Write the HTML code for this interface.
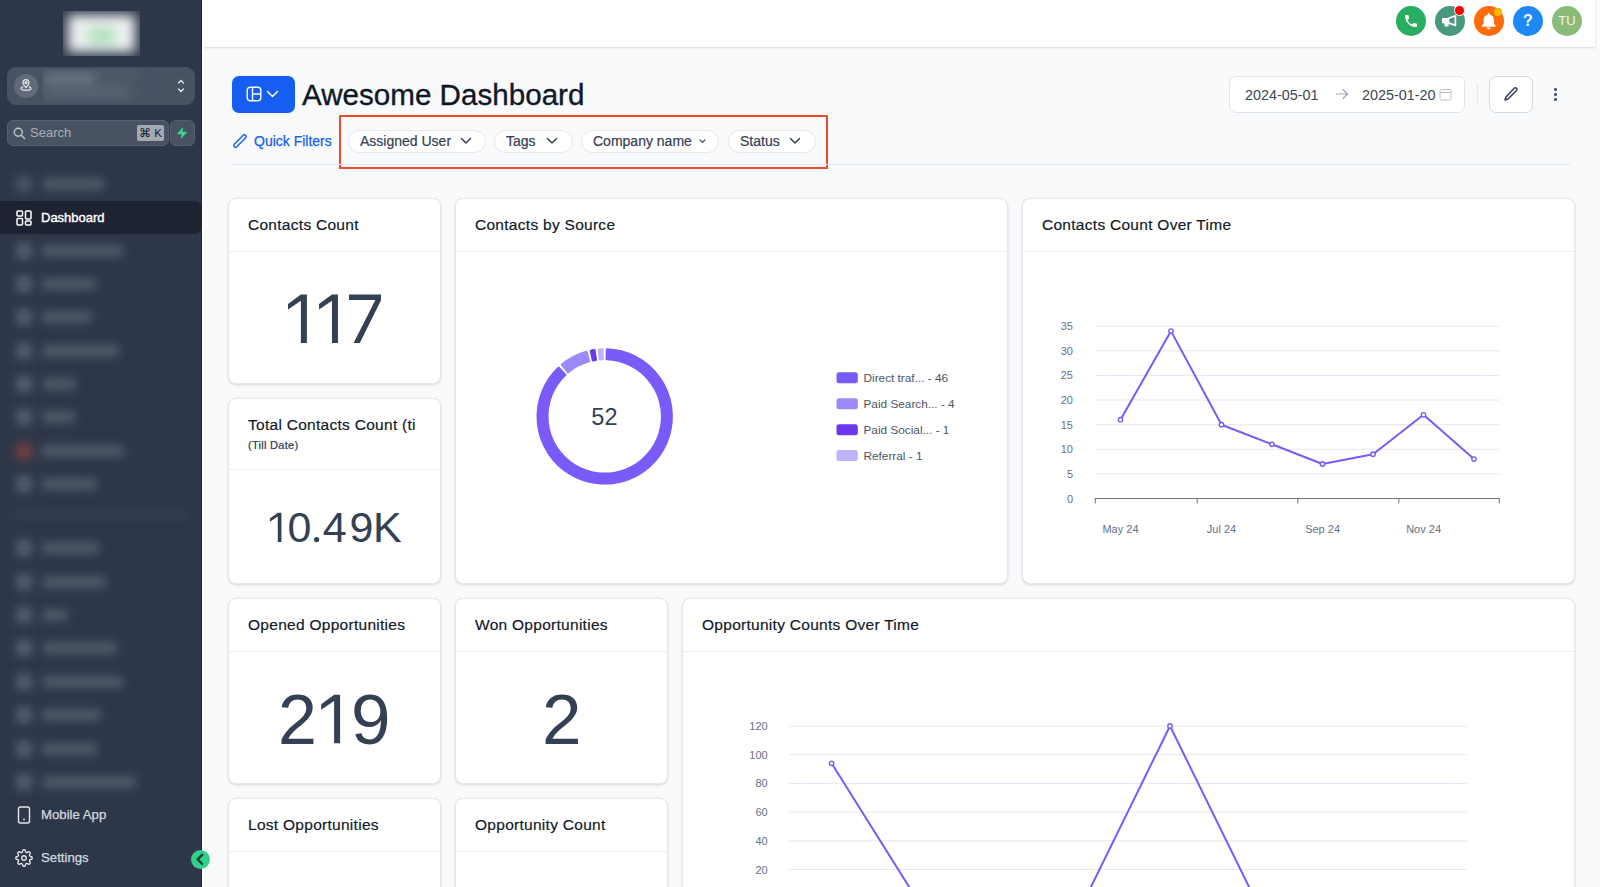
<!DOCTYPE html>
<html>
<head>
<meta charset="utf-8">
<style>
*{box-sizing:border-box;margin:0;padding:0}
html,body{width:1600px;height:887px;overflow:hidden}
body{font-family:"Liberation Sans",sans-serif;background:#f9fafb;position:relative;color:#101828}
.abs{position:absolute}
/* sidebar */
#sb{position:absolute;left:0;top:0;width:202px;height:887px;background:#2e3749;border-right:1px solid #1f2633}
.blur{position:absolute;filter:blur(4px)}
.nb{position:absolute;background:#4f5969;border-radius:3px}
.ni{position:absolute;background:#4b5465;border-radius:3px}
.sbt{position:absolute;color:#d6dae1;font-size:13.2px;-webkit-text-stroke:0.25px #d6dae1}
/* topbar */
#tb{position:absolute;left:202px;top:0;width:1393px;height:47px;background:#fff;box-shadow:0 1px 2px rgba(0,0,0,.14)}
.tic{position:absolute;top:6px;width:30px;height:30px;border-radius:50%}
/* cards */
.card{position:absolute;background:#fff;border:1px solid #e6e8ec;border-radius:8px;box-shadow:0 1px 3px rgba(16,24,40,.10),0 1px 2px rgba(16,24,40,.06)}
.ch{position:absolute;left:0;right:0;top:0;border-bottom:1px solid #edeff2}
.ct{position:absolute;left:19px;font-size:15.5px;color:#101828;white-space:nowrap;-webkit-text-stroke:0.18px #101828;letter-spacing:0.28px}
.big{position:absolute;left:0;right:0;text-align:center;color:#344054;line-height:1}
.pill{position:absolute;top:130px;height:23px;border:1px solid #e4e7ec;border-radius:12px;background:#fff;font-size:14px;color:#344054}
.pill span{position:absolute;top:2px;white-space:nowrap;-webkit-text-stroke:0.2px #344054}
.lab{font-family:"Liberation Sans",sans-serif;font-size:11px;fill:#667085}
</style>
</head>
<body>
<!-- SIDEBAR -->
<div id="sb">
  <div class="abs" style="left:63px;top:11px;width:77px;height:45px;overflow:hidden;background:#343d4e"><div class="blur" style="left:5px;top:4px;width:67px;height:37px;filter:blur(6px);background:radial-gradient(ellipse 45% 50% at 50% 55%,#98d4ab 0%,#c8e8d0 45%,#f2f4f5 75%,#eceef1 100%)"></div></div>
  <!-- location switcher -->
  <div class="abs" style="left:7px;top:67px;width:188px;height:38px;background:#485263;border-radius:9px"></div>
  <div class="abs" style="left:14px;top:74px;width:24px;height:24px;border-radius:50%;background:#606a7a"></div>
  <svg class="abs" style="left:19px;top:78px" width="14" height="14" viewBox="0 0 14 14" fill="none" stroke="#e5e7eb" stroke-width="1.3"><path d="M7 9.5C7 9.5 10 6.8 10 4.6A3 3 0 0 0 4 4.6C4 6.8 7 9.5 7 9.5Z"/><circle cx="7" cy="4.6" r="1"/><path d="M4.2 8.6C2.8 9 2 9.6 2 10.3 2 11.4 4.2 12.2 7 12.2S12 11.4 12 10.3C12 9.6 11.2 9 9.8 8.6"/></svg>
  <div class="abs" style="left:43px;top:69px;width:125px;height:34px;overflow:hidden;background:#485263"><div class="blur" style="left:-6px;top:-4px;width:100px;height:40px;background:#4e5868;filter:blur(6px)"></div><div class="blur" style="left:2px;top:4px;width:50px;height:14px;background:#68717f;filter:blur(5px)"></div><div class="blur" style="left:4px;top:19px;width:80px;height:9px;background:#5a6474;filter:blur(5px)"></div></div>
  <svg class="abs" style="left:176px;top:78px" width="10" height="16" viewBox="0 0 10 16" fill="none" stroke="#e5e7eb" stroke-width="1.3" stroke-linecap="round"><path d="M2.5 5L5 2.5 7.5 5M2.5 11L5 13.5 7.5 11"/></svg>
  <!-- search -->
  <div class="abs" style="left:7px;top:120px;width:162px;height:26px;background:#485263;border:1px solid #566072;border-radius:6px"></div>
  <svg class="abs" style="left:13px;top:127px" width="13" height="13" viewBox="0 0 13 13" fill="none" stroke="#c3c8d0" stroke-width="1.4"><circle cx="5.3" cy="5.3" r="4"/><path d="M8.3 8.3L12 12"/></svg>
  <div class="sbt" style="left:30px;top:125px;color:#aab0ba;font-size:13px;-webkit-text-stroke:0">Search</div>
  <div class="abs" style="left:137px;top:125px;width:27px;height:16px;background:#a3a9b3;border-radius:2px;font-size:11.5px;color:#111827;text-align:center;line-height:16px">&#8984; K</div>
  <div class="abs" style="left:170px;top:120px;width:25px;height:26px;background:#485263;border:1px solid #566072;border-radius:6px"></div>
  <svg class="abs" style="left:176px;top:127px" width="12" height="12" viewBox="0 0 20 20"><path fill="#3bd38f" d="M11.983 1.907a.75.75 0 00-1.292-.657l-8.5 9.5A.75.75 0 002.75 12h6.572l-1.305 6.093a.75.75 0 001.292.657l8.5-9.5A.75.75 0 0017.25 8h-6.572l1.305-6.093z"/></svg>

  <!-- nav -->
  <div id="nav" style="position:absolute;left:0;top:0;width:202px;height:887px;filter:blur(5px)">
<div class="nb" style="left:16px;top:176px;width:16px;height:16px;background:#4b5465"></div>
<div class="nb" style="left:42px;top:178px;width:62px;height:12px"></div>
<div class="nb" style="left:16px;top:243px;width:16px;height:16px;background:#535d6d"></div>
<div class="nb" style="left:42px;top:245px;width:81px;height:12px"></div>
<div class="nb" style="left:16px;top:276px;width:16px;height:16px;background:#535d6d"></div>
<div class="nb" style="left:42px;top:278px;width:54px;height:12px"></div>
<div class="nb" style="left:16px;top:309px;width:16px;height:16px;background:#535d6d"></div>
<div class="nb" style="left:42px;top:311px;width:50px;height:12px"></div>
<div class="nb" style="left:16px;top:343px;width:16px;height:16px;background:#535d6d"></div>
<div class="nb" style="left:42px;top:345px;width:77px;height:12px"></div>
<div class="nb" style="left:16px;top:376px;width:16px;height:16px;background:#535d6d"></div>
<div class="nb" style="left:42px;top:378px;width:34px;height:12px"></div>
<div class="nb" style="left:16px;top:409px;width:16px;height:16px;background:#535d6d"></div>
<div class="nb" style="left:42px;top:411px;width:33px;height:12px"></div>
<div class="nb" style="left:16px;top:443px;width:16px;height:16px;background:#74403f"></div>
<div class="nb" style="left:42px;top:445px;width:82px;height:12px"></div>
<div class="nb" style="left:16px;top:476px;width:16px;height:16px;background:#535d6d"></div>
<div class="nb" style="left:42px;top:478px;width:55px;height:12px"></div>
<div class="nb" style="left:16px;top:540px;width:16px;height:16px;background:#535d6d"></div>
<div class="nb" style="left:42px;top:542px;width:57px;height:12px"></div>
<div class="nb" style="left:16px;top:574px;width:16px;height:16px;background:#535d6d"></div>
<div class="nb" style="left:42px;top:576px;width:64px;height:12px"></div>
<div class="nb" style="left:16px;top:607px;width:16px;height:16px;background:#535d6d"></div>
<div class="nb" style="left:42px;top:609px;width:26px;height:12px"></div>
<div class="nb" style="left:16px;top:640px;width:16px;height:16px;background:#535d6d"></div>
<div class="nb" style="left:42px;top:642px;width:75px;height:12px"></div>
<div class="nb" style="left:16px;top:674px;width:16px;height:16px;background:#535d6d"></div>
<div class="nb" style="left:42px;top:676px;width:81px;height:12px"></div>
<div class="nb" style="left:16px;top:707px;width:16px;height:16px;background:#535d6d"></div>
<div class="nb" style="left:42px;top:709px;width:59px;height:12px"></div>
<div class="nb" style="left:16px;top:741px;width:16px;height:16px;background:#535d6d"></div>
<div class="nb" style="left:42px;top:743px;width:55px;height:12px"></div>
<div class="nb" style="left:16px;top:774px;width:16px;height:16px;background:#535d6d"></div>
<div class="nb" style="left:42px;top:776px;width:94px;height:12px"></div>
<div class="nb" style="left:14px;top:513px;width:174px;height:3px;background:#414a5a"></div>
</div>
</div>
  <div class="abs" style="left:0;top:201px;width:202px;height:33px;background:#1d2330;border-radius:0 8px 8px 0"></div>
  <svg class="abs" style="left:16px;top:210px" width="16" height="16" viewBox="0 0 16 16" fill="none" stroke="#fff" stroke-width="1.5"><rect x="1" y="1" width="5.5" height="5" rx="1"/><rect x="9.5" y="1" width="5.5" height="8" rx="1"/><rect x="1" y="8.5" width="5.5" height="6.5" rx="1"/><rect x="9.5" y="11" width="5.5" height="4" rx="1"/></svg>
  <div class="sbt" style="left:41px;top:210px;color:#fff;font-size:13px;-webkit-text-stroke:0.4px #fff">Dashboard</div>

  <svg class="abs" style="left:16px;top:806px" width="16" height="18" viewBox="0 0 16 18" fill="none" stroke="#e4e7ec" stroke-width="1.4"><rect x="2.5" y="1" width="11" height="16" rx="2"/><circle cx="8" cy="13.5" r="0.9" fill="#e4e7ec" stroke="none"/></svg>
  <div class="sbt" style="left:41px;top:807px">Mobile App</div>
  <svg class="abs" style="left:15px;top:849px" width="18" height="18" viewBox="0 0 24 24" fill="none" stroke="#e4e7ec" stroke-width="1.8"><circle cx="12" cy="12" r="3"/><path d="M19.4 15a1.65 1.65 0 0 0 .33 1.82l.06.06a2 2 0 1 1-2.83 2.83l-.06-.06a1.65 1.65 0 0 0-1.82-.33 1.65 1.65 0 0 0-1 1.51V21a2 2 0 1 1-4 0v-.09A1.65 1.65 0 0 0 9 19.4a1.65 1.65 0 0 0-1.82.33l-.06.06a2 2 0 1 1-2.83-2.83l.06-.06A1.65 1.65 0 0 0 4.68 15a1.65 1.65 0 0 0-1.51-1H3a2 2 0 1 1 0-4h.09A1.65 1.65 0 0 0 4.6 9a1.65 1.65 0 0 0-.33-1.82l-.06-.06a2 2 0 1 1 2.83-2.83l.06.06A1.65 1.65 0 0 0 9 4.68a1.65 1.65 0 0 0 1-1.51V3a2 2 0 1 1 4 0v.09a1.65 1.65 0 0 0 1 1.51 1.65 1.65 0 0 0 1.82-.33l.06-.06a2 2 0 1 1 2.83 2.83l-.06.06A1.65 1.65 0 0 0 19.4 9a1.65 1.65 0 0 0 1.51 1H21a2 2 0 1 1 0 4h-.09a1.65 1.65 0 0 0-1.51 1z"/></svg>
  <div class="sbt" style="left:41px;top:850px">Settings</div>
</div>
<!-- collapse button -->



<!-- TOPBAR -->
<div id="tb"></div>
<div class="tic" style="left:1396px;background:#27ae60"></div>
<svg class="abs" style="left:1403px;top:13px" width="16" height="16" viewBox="0 0 24 24"><path fill="#fff" d="M6.6 10.8c1.4 2.8 3.8 5.1 6.6 6.6l2.2-2.2c.3-.3.7-.4 1-.2 1.1.4 2.3.6 3.6.6.6 0 1 .4 1 1V20c0 .6-.4 1-1 1C10.6 21 3 13.4 3 4c0-.6.4-1 1-1h3.5c.6 0 1 .4 1 1 0 1.2.2 2.4.6 3.6.1.3 0 .7-.2 1L6.6 10.8z"/></svg>
<div class="tic" style="left:1435px;background:#4a9780"></div>
<svg class="abs" style="left:1441px;top:12px" width="17" height="17" viewBox="0 0 17 17"><path fill="#fff" d="M1.6 6h6v5.3H7.5l0.1 3.3H3.9l-0.8-3.3H1.6A0.6 0.6 0 0 1 1 10.7V6.6A0.6 0.6 0 0 1 1.6 6z"/><path fill="none" stroke="#fff" stroke-width="1.7" stroke-linejoin="round" d="M7.4 6.4L14.4 3.8v9.6L7.4 10.9z"/></svg>
<div class="abs" style="left:1454px;top:5px;width:11px;height:11px;border-radius:50%;background:#ff0000;border:1px solid #fff"></div>
<div class="tic" style="left:1474px;background:#ff6b0a"></div>
<svg class="abs" style="left:1480px;top:11.5px" width="17.5" height="18.5" viewBox="0 0 16 17"><path fill="#fff" d="M8 1c.5 0 .9.4.9.9v.3c2.3.5 3.8 2.4 3.8 4.8v3.6l1.6 2v.9H1.7v-.9l1.6-2V7c0-2.4 1.5-4.3 3.8-4.8v-.3c0-.5.4-.9.9-.9z"/><path fill="#fff" d="M6.3 14.3h3.4a1.7 1.7 0 0 1-3.4 0z"/></svg>
<div class="abs" style="left:1494px;top:8px;width:7.5px;height:7.5px;border-radius:50%;background:#ffb703"></div>
<div class="tic" style="left:1513px;background:#1e88f5"></div>
<div class="abs" style="left:1513px;top:6px;width:30px;height:30px;text-align:center;line-height:30px;color:#fff;font-weight:bold;font-size:16px">?</div>
<div class="tic" style="left:1552px;background:#8cba79"></div>
<div class="abs" style="left:1552px;top:6px;width:30px;height:30px;text-align:center;line-height:30px;color:#f0f7ec;font-size:13px">TU</div>

<!-- MAIN CONTENT -->
<!-- header -->
<div class="abs" style="left:202px;top:47px;width:2px;height:840px;background:#fff"></div>
<div class="abs" style="left:232px;top:76px;width:63px;height:37px;background:#155eef;border-radius:7px"></div>
<svg class="abs" style="left:246px;top:86px" width="16" height="16" viewBox="0 0 16 16" fill="none" stroke="#fff" stroke-width="1.4"><rect x="1.2" y="1.2" width="13.6" height="13.6" rx="3"/><path d="M6.5 1.2v13.6M6.5 8h8.3"/></svg>
<svg class="abs" style="left:266px;top:89px" width="13" height="10" viewBox="0 0 13 10" fill="none" stroke="#fff" stroke-width="1.5" stroke-linecap="round" stroke-linejoin="round"><path d="M1.5 2.5L6.5 7.5 11.5 2.5"/></svg>
<div class="abs" style="left:302px;top:78px;font-size:29.6px;color:#101828;white-space:nowrap;-webkit-text-stroke:0.35px #101828">Awesome Dashboard</div>

<!-- date picker -->
<div class="abs" style="left:1229px;top:76px;width:236px;height:37px;background:#fff;border:1px solid #e1e4e9;border-radius:7px"></div>
<div class="abs" style="left:1245px;top:87px;font-size:14.4px;color:#3d4655">2024-05-01</div>
<svg class="abs" style="left:1335px;top:88px" width="14" height="12" viewBox="0 0 14 12" fill="none" stroke="#98a2b3" stroke-width="1.1" stroke-linecap="round"><path d="M1.5 6h11M8 1.5L12.5 6 8 10.5"/></svg>
<div class="abs" style="left:1362px;top:87px;font-size:14.4px;color:#3d4655">2025-01-20</div>
<svg class="abs" style="left:1439px;top:88px" width="13" height="13" viewBox="0 0 13 13" fill="none" stroke="#b8bec8" stroke-width="1"><rect x="1" y="1.5" width="11" height="10.5" rx="1.5"/><path d="M1 4.5h11"/></svg>
<div class="abs" style="left:1477px;top:84px;width:1px;height:21px;background:#e4e7ec"></div>
<div class="abs" style="left:1489px;top:76px;width:44px;height:37px;background:#fff;border:1px solid #d5d9e0;border-radius:7px"></div>
<svg class="abs" style="left:1503px;top:86px" width="16" height="16" viewBox="0 0 16 16" fill="none" stroke="#344054" stroke-width="1.5" stroke-linecap="round" stroke-linejoin="round"><path d="M11.2 2.2a1.6 1.6 0 0 1 2.3 2.3L5 13 2 14l1-3z"/></svg>
<div class="abs" style="left:1554px;top:88px;width:2.6px;height:2.6px;border-radius:50%;background:#475467"></div>
<div class="abs" style="left:1554px;top:93px;width:2.6px;height:2.6px;border-radius:50%;background:#475467"></div>
<div class="abs" style="left:1554px;top:98px;width:2.6px;height:2.6px;border-radius:50%;background:#475467"></div>

<!-- quick filters -->
<svg class="abs" style="left:231px;top:133px" width="17" height="17" viewBox="0 0 17 17"><rect x="6.7" y="-0.3" width="3.6" height="16.2" rx="1.8" transform="rotate(45 8.5 8.5)" fill="none" stroke="#155eef" stroke-width="1.4"/></svg>
<div class="abs" style="left:254px;top:133px;font-size:14px;color:#155eef;white-space:nowrap;-webkit-text-stroke:0.25px #155eef">Quick Filters</div>
<div class="abs" style="left:339px;top:115px;width:489px;height:54px;border:2px solid #ee4b2b"></div>
<div class="pill" style="left:348px;width:138px"><span style="left:11px">Assigned User</span></div>
<svg class="abs" style="left:460px;top:136px" width="12" height="10" viewBox="0 0 12 10" fill="none" stroke="#344054" stroke-width="1.5" stroke-linecap="round" stroke-linejoin="round"><path d="M1.5 2.5L6 7 10.5 2.5"/></svg>
<div class="pill" style="left:494px;width:79px"><span style="left:11px">Tags</span></div>
<svg class="abs" style="left:546px;top:136px" width="12" height="10" viewBox="0 0 12 10" fill="none" stroke="#344054" stroke-width="1.5" stroke-linecap="round" stroke-linejoin="round"><path d="M1.5 2.5L6 7 10.5 2.5"/></svg>
<div class="pill" style="left:581px;width:138px"><span style="left:11px">Company name</span></div>
<svg class="abs" style="left:698px;top:137px" width="9" height="8" viewBox="0 0 9 8" fill="none" stroke="#344054" stroke-width="1.2" stroke-linecap="round" stroke-linejoin="round"><path d="M2 2.8L4.5 5.3 7 2.8"/></svg>
<div class="pill" style="left:728px;width:88px"><span style="left:11px">Status</span></div>
<svg class="abs" style="left:789px;top:136px" width="12" height="10" viewBox="0 0 12 10" fill="none" stroke="#344054" stroke-width="1.5" stroke-linecap="round" stroke-linejoin="round"><path d="M1.5 2.5L6 7 10.5 2.5"/></svg>
<div class="abs" style="left:232px;top:164px;width:1338px;height:1px;background:#e4e7ec"></div>

<!-- cards -->
<div class="card" style="left:228px;top:198px;width:213px;height:186px">
  <div class="ch" style="height:53px"></div>
  <div class="ct" style="top:17px">Contacts Count</div>
  <div class="big" style="top:288px;font-size:70px"></div>
</div>

<div class="card" style="left:228px;top:398px;width:213px;height:186px">
  <div class="ch" style="height:71px"></div>
  <div class="ct" style="top:17px">Total Contacts Count (ti</div>
  <div class="ct" style="top:40px;font-size:11px;color:#344054">(Till Date)</div>
</div>

<div class="card" style="left:455px;top:198px;width:553px;height:386px">
  <div class="ch" style="height:53px"></div>
  <div class="ct" style="top:17px">Contacts by Source</div>
</div>

<div class="card" style="left:1022px;top:198px;width:553px;height:386px">
  <div class="ch" style="height:53px"></div>
  <div class="ct" style="top:17px">Contacts Count Over Time</div>
</div>

<div class="card" style="left:228px;top:598px;width:213px;height:186px">
  <div class="ch" style="height:53px"></div>
  <div class="ct" style="top:17px">Opened Opportunities</div>
</div>

<div class="card" style="left:455px;top:598px;width:213px;height:186px">
  <div class="ch" style="height:53px"></div>
  <div class="ct" style="top:17px">Won Opportunities</div>
</div>

<div class="card" style="left:682px;top:598px;width:893px;height:320px">
  <div class="ch" style="height:53px"></div>
  <div class="ct" style="top:17px">Opportunity Counts Over Time</div>
</div>

<div class="card" style="left:228px;top:798px;width:213px;height:120px">
  <div class="ch" style="height:53px"></div>
  <div class="ct" style="top:17px">Lost Opportunities</div>
</div>
<div class="card" style="left:455px;top:798px;width:213px;height:120px">
  <div class="ch" style="height:53px"></div>
  <div class="ct" style="top:17px">Opportunity Count</div>
</div>


<svg class="abs" style="left:0;top:0" width="1600" height="887"><path d="M607.04 349.44A67.0 67.0 0 1 1 558.55 367.83L565.16 374.79A57.4 57.4 0 1 0 606.70 359.03Z" fill="#7a5af8" stroke="#7a5af8" stroke-width="2.4" stroke-linejoin="round"/><path d="M562.05 364.73A67.0 67.0 0 0 1 586.41 351.95L589.03 361.18A57.4 57.4 0 0 0 568.16 372.13Z" fill="#9b8afb" stroke="#9b8afb" stroke-width="2.4" stroke-linejoin="round"/><path d="M590.95 350.83A67.0 67.0 0 0 1 594.31 350.21L595.80 359.69A57.4 57.4 0 0 0 592.92 360.22Z" fill="#6938ef" stroke="#6938ef" stroke-width="2.4" stroke-linejoin="round"/><path d="M598.95 349.65A67.0 67.0 0 0 1 602.36 349.44L602.70 359.03A57.4 57.4 0 0 0 599.77 359.21Z" fill="#bdb4fe" stroke="#bdb4fe" stroke-width="2.4" stroke-linejoin="round"/><text x="604.4" y="425.3" text-anchor="middle" font-family="Liberation Sans" font-size="23.5" fill="#344054">52</text><rect x="836.5" y="372.3" width="21.3" height="11" rx="2.5" fill="#7a5af8"/><text x="863.5" y="382.0" font-family="Liberation Sans" font-size="11.8" fill="#4b5563">Direct traf... - 46</text><rect x="836.5" y="398.2" width="21.3" height="11" rx="2.5" fill="#9b8afb"/><text x="863.5" y="407.9" font-family="Liberation Sans" font-size="11.8" fill="#4b5563">Paid Search... - 4</text><rect x="836.5" y="424.2" width="21.3" height="11" rx="2.5" fill="#6938ef"/><text x="863.5" y="433.9" font-family="Liberation Sans" font-size="11.8" fill="#4b5563">Paid Social... - 1</text><rect x="836.5" y="450.1" width="21.3" height="11" rx="2.5" fill="#bdb4fe"/><text x="863.5" y="459.8" font-family="Liberation Sans" font-size="11.8" fill="#4b5563">Referral - 1</text><text x="1073" y="502.5" text-anchor="end" class="lab">0</text><line x1="1094.8" y1="473.9" x2="1499.8" y2="473.9" stroke="#e3e8f3" stroke-width="1"/><text x="1073" y="477.9" text-anchor="end" class="lab">5</text><line x1="1094.8" y1="449.3" x2="1499.8" y2="449.3" stroke="#e3e8f3" stroke-width="1"/><text x="1073" y="453.3" text-anchor="end" class="lab">10</text><line x1="1094.8" y1="424.7" x2="1499.8" y2="424.7" stroke="#e3e8f3" stroke-width="1"/><text x="1073" y="428.7" text-anchor="end" class="lab">15</text><line x1="1094.8" y1="400.0" x2="1499.8" y2="400.0" stroke="#e3e8f3" stroke-width="1"/><text x="1073" y="404.0" text-anchor="end" class="lab">20</text><line x1="1094.8" y1="375.4" x2="1499.8" y2="375.4" stroke="#e3e8f3" stroke-width="1"/><text x="1073" y="379.4" text-anchor="end" class="lab">25</text><line x1="1094.8" y1="350.8" x2="1499.8" y2="350.8" stroke="#e3e8f3" stroke-width="1"/><text x="1073" y="354.8" text-anchor="end" class="lab">30</text><line x1="1094.8" y1="326.2" x2="1499.8" y2="326.2" stroke="#e3e8f3" stroke-width="1"/><text x="1073" y="330.2" text-anchor="end" class="lab">35</text><line x1="1094.8" y1="498.5" x2="1499.8" y2="498.5" stroke="#6e7079" stroke-width="1"/><line x1="1095.3" y1="498.5" x2="1095.3" y2="503.5" stroke="#6e7079" stroke-width="1"/><line x1="1197.2" y1="498.5" x2="1197.2" y2="503.5" stroke="#6e7079" stroke-width="1"/><line x1="1297.8" y1="498.5" x2="1297.8" y2="503.5" stroke="#6e7079" stroke-width="1"/><line x1="1398.8" y1="498.5" x2="1398.8" y2="503.5" stroke="#6e7079" stroke-width="1"/><line x1="1499.3" y1="498.5" x2="1499.3" y2="503.5" stroke="#6e7079" stroke-width="1"/><text x="1120.5" y="533" text-anchor="middle" class="lab">May 24</text><text x="1221.5" y="533" text-anchor="middle" class="lab">Jul 24</text><text x="1322.6" y="533" text-anchor="middle" class="lab">Sep 24</text><text x="1423.6" y="533" text-anchor="middle" class="lab">Nov 24</text><polyline fill="none" stroke="#7a5af8" stroke-width="2" stroke-linejoin="round" points="1120.5,419.7 1171.0,331.1 1221.5,424.7 1272.0,444.3 1322.5,464.0 1373.0,454.2 1423.5,414.8 1474.0,459.1"/><circle cx="1120.5" cy="419.7" r="2.2" fill="#fff" stroke="#7a5af8" stroke-width="1.4"/><circle cx="1171.0" cy="331.1" r="2.2" fill="#fff" stroke="#7a5af8" stroke-width="1.4"/><circle cx="1221.5" cy="424.7" r="2.2" fill="#fff" stroke="#7a5af8" stroke-width="1.4"/><circle cx="1272.0" cy="444.3" r="2.2" fill="#fff" stroke="#7a5af8" stroke-width="1.4"/><circle cx="1322.5" cy="464.0" r="2.2" fill="#fff" stroke="#7a5af8" stroke-width="1.4"/><circle cx="1373.0" cy="454.2" r="2.2" fill="#fff" stroke="#7a5af8" stroke-width="1.4"/><circle cx="1423.5" cy="414.8" r="2.2" fill="#fff" stroke="#7a5af8" stroke-width="1.4"/><circle cx="1474.0" cy="459.1" r="2.2" fill="#fff" stroke="#7a5af8" stroke-width="1.4"/><line x1="789.2" y1="869.5" x2="1466.5" y2="869.5" stroke="#e3e8f3" stroke-width="1"/><text x="767.7" y="873.5" text-anchor="end" class="lab">20</text><line x1="789.2" y1="840.8" x2="1466.5" y2="840.8" stroke="#e3e8f3" stroke-width="1"/><text x="767.7" y="844.8" text-anchor="end" class="lab">40</text><line x1="789.2" y1="812.1" x2="1466.5" y2="812.1" stroke="#e3e8f3" stroke-width="1"/><text x="767.7" y="816.1" text-anchor="end" class="lab">60</text><line x1="789.2" y1="783.4" x2="1466.5" y2="783.4" stroke="#e3e8f3" stroke-width="1"/><text x="767.7" y="787.4" text-anchor="end" class="lab">80</text><line x1="789.2" y1="754.7" x2="1466.5" y2="754.7" stroke="#e3e8f3" stroke-width="1"/><text x="767.7" y="758.7" text-anchor="end" class="lab">100</text><line x1="789.2" y1="726.0" x2="1466.5" y2="726.0" stroke="#e3e8f3" stroke-width="1"/><text x="767.7" y="730.0" text-anchor="end" class="lab">120</text><polyline fill="none" stroke="#7a5af8" stroke-width="2" stroke-linejoin="round" points="831.6,763.3 916.2,898.2 1000.8,898.2 1085.4,898.2 1170.0,726.0 1254.6,898.2 1339.2,898.2 1423.8,898.2"/><circle cx="831.6" cy="763.3" r="2.2" fill="#fff" stroke="#7a5af8" stroke-width="1.4"/><circle cx="916.2" cy="898.2" r="2.2" fill="#fff" stroke="#7a5af8" stroke-width="1.4"/><circle cx="1000.8" cy="898.2" r="2.2" fill="#fff" stroke="#7a5af8" stroke-width="1.4"/><circle cx="1085.4" cy="898.2" r="2.2" fill="#fff" stroke="#7a5af8" stroke-width="1.4"/><circle cx="1170.0" cy="726.0" r="2.2" fill="#fff" stroke="#7a5af8" stroke-width="1.4"/><circle cx="1254.6" cy="898.2" r="2.2" fill="#fff" stroke="#7a5af8" stroke-width="1.4"/><circle cx="1339.2" cy="898.2" r="2.2" fill="#fff" stroke="#7a5af8" stroke-width="1.4"/><circle cx="1423.8" cy="898.2" r="2.2" fill="#fff" stroke="#7a5af8" stroke-width="1.4"/></svg>
<svg class="abs" style="left:0;top:0" width="1600" height="887" fill="#344054"><polygon points="288.00,304.00 300.90,294.60 306.90,294.60 306.90,342.90 300.90,342.90 300.90,300.80 288.00,309.60"/><polygon points="319.05,304.00 331.95,294.60 337.95,294.60 337.95,342.90 331.95,342.90 331.95,300.80 319.05,309.60"/><polygon points="349,294.6 381,294.6 381,300.3 359.8,342.9 353.6,342.9 375.4,299.9 349,299.9"/><text x="277.9" y="743.5" font-family="Liberation Sans" font-size="70">2</text><polygon points="321.20,704.20 334.10,694.80 340.10,694.80 340.10,743.30 334.10,743.30 334.10,701.00 321.20,709.80"/><text x="350.9" y="743.5" font-family="Liberation Sans" font-size="71">9</text><text x="542.1" y="743.5" font-family="Liberation Sans" font-size="71">2</text><polygon points="269.90,518.43 277.77,512.70 281.43,512.70 281.43,541.90 277.77,541.90 277.77,516.48 269.90,521.85"/><text x="287.4" y="541.9" font-family="Liberation Sans" font-size="43">0</text><circle cx="316.6" cy="539.6" r="2.6"/><text x="322.75" y="541.9" font-family="Liberation Sans" font-size="43">4</text><text x="349.5" y="541.9" font-family="Liberation Sans" font-size="43">9</text><text x="372.9" y="541.9" font-family="Liberation Sans" font-size="43">K</text></svg>
<div class="abs" style="left:191px;top:850px;width:19px;height:19px;border-radius:50%;background:#32d08a;z-index:10"></div><svg class="abs" style="left:194px;top:853px;z-index:11" width="12" height="13" viewBox="0 0 12 13" fill="none" stroke="#17463a" stroke-width="2.4" stroke-linecap="round" stroke-linejoin="round"><path d="M8.2 1.8L3.6 6.4 8.2 11"/></svg>
</body>
</html>
